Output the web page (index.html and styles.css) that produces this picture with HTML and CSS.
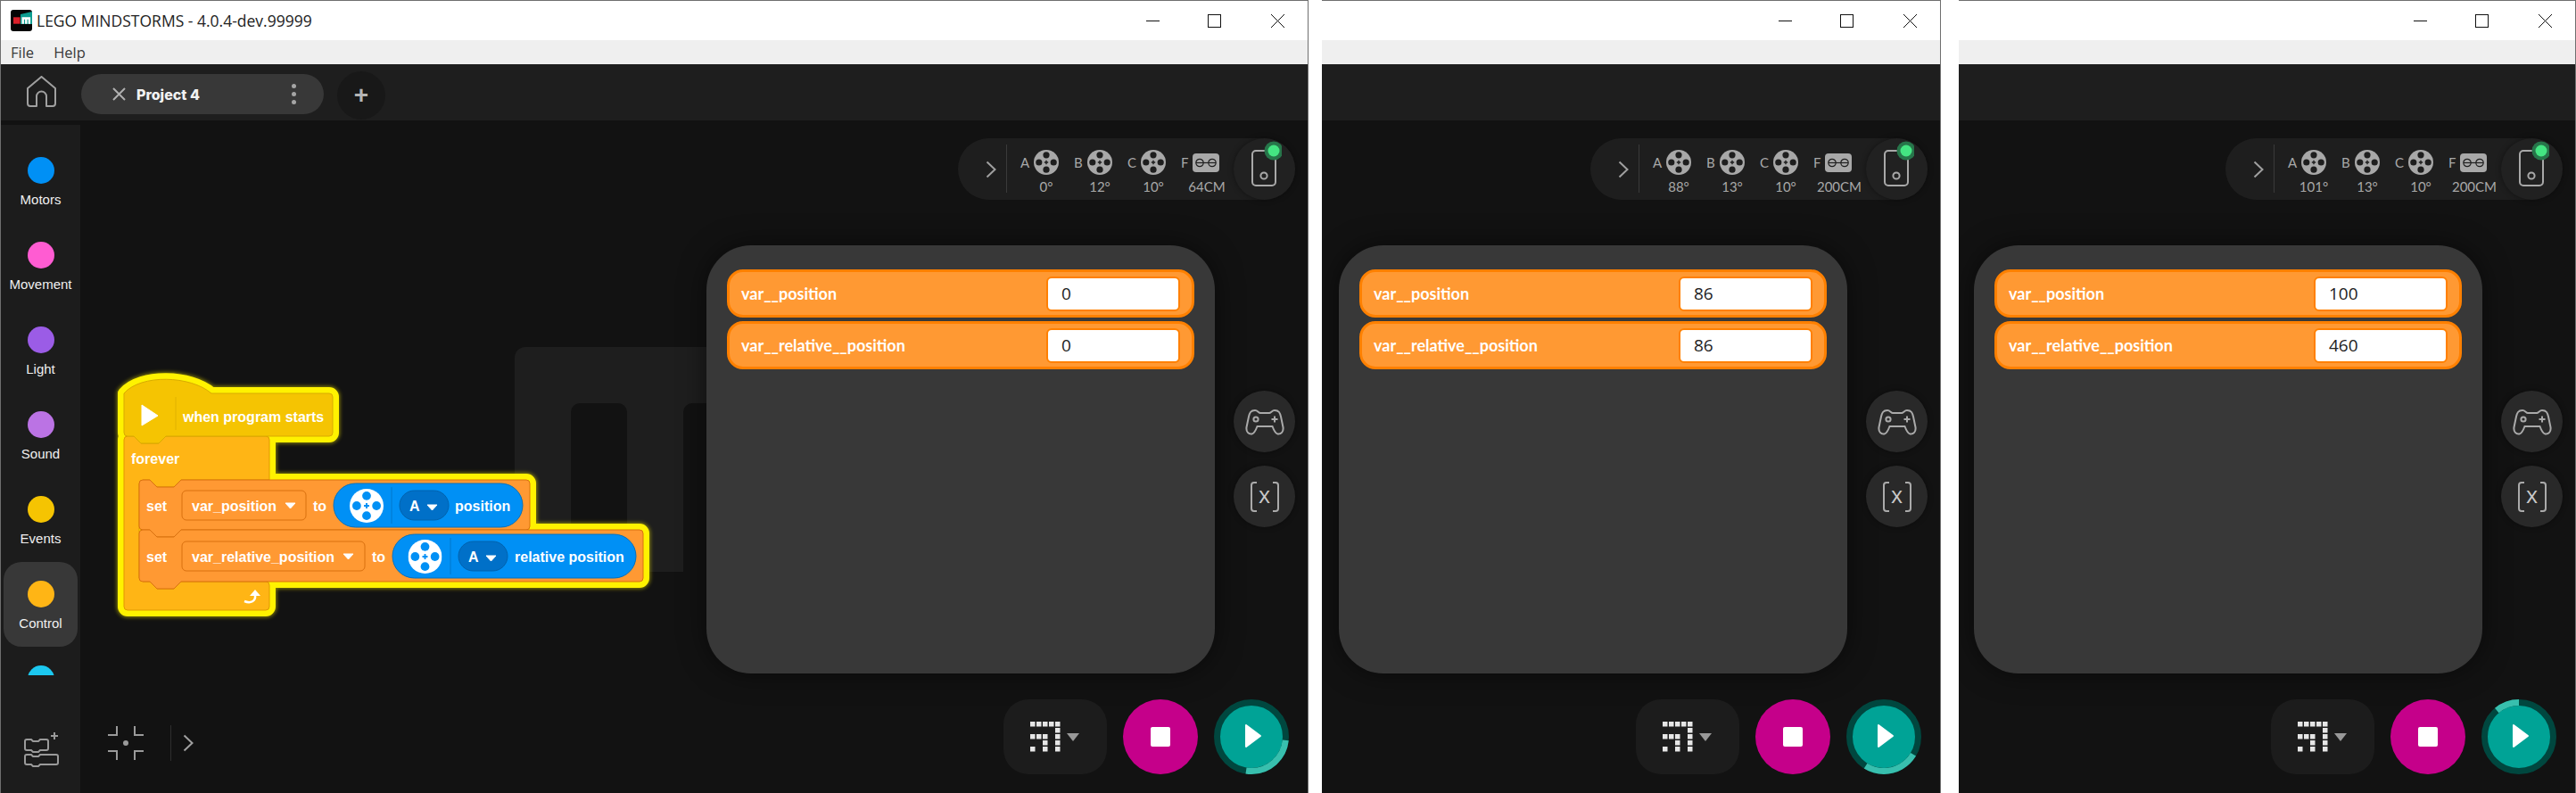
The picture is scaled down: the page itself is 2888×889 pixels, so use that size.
FILE: index.html
```html
<!DOCTYPE html>
<html lang="en">
<head>
    <meta charset="UTF-8">
    <title>LEGO MINDSTORMS - 4.0.4-dev.99999</title>
    <link rel="stylesheet" href="styles.css">
</head>
<body>
    <!-- shared icons -->
    <svg class="icon-defs" width="0" height="0">
        <symbol id="wheel" viewBox="0 0 28 28">
            <circle class="wheel-body" cx="14" cy="14" r="14"/>
            <circle class="wheel-hole" cx="14" cy="5.8" r="3.6"/>
            <circle class="wheel-hole" cx="14" cy="22.2" r="3.6"/>
            <circle class="wheel-hole" cx="5.8" cy="14" r="3.6"/>
            <circle class="wheel-hole" cx="22.2" cy="14" r="3.6"/>
            <path class="wheel-hole" d="M13.3 11.8h1.4v1.5h1.5v1.4h-1.5v1.5h-1.4v-1.5h-1.5v-1.4h1.5z"/>
        </symbol>
        <symbol id="sensor" viewBox="0 0 30 21">
            <rect class="wheel-body" width="30" height="21" rx="4"/>
            <circle class="sensor-eye" cx="8" cy="10.5" r="4.2"/>
            <circle class="sensor-eye" cx="22" cy="10.5" r="4.2"/>
            <path class="sensor-eye" d="M4 10.5h22"/>
        </symbol>
        <symbol id="hub" viewBox="0 0 40 60">
            <rect class="hub-line" x="7" y="11" width="26" height="39" rx="4"/>
            <circle class="hub-line" cx="20" cy="39" r="3.6"/>
            <circle class="hub-halo" cx="31" cy="11" r="10.5"/>
            <circle class="hub-led" cx="31" cy="11" r="6.5"/>
        </symbol>
        <symbol id="chevron" viewBox="0 0 12 20">
            <path class="chevron-line" d="M1.5 1.5L10.5 10L1.5 18.5"/>
        </symbol>
        <symbol id="gamepad" viewBox="0 0 44 30">
            <path class="pad-line" d="M11 2C6 2 5 5 4 9L1.5 21C.8 26 4 29 7.5 28.5C10 28 12 24 13.5 20H30.5C32 24 34 28 36.5 28.5C40 29 43.2 26 42.5 21L40 9C39 5 38 2 33 2C30 2 29 5 27 5H17C15 5 14 2 11 2Z"/>
            <circle class="pad-line" cx="12" cy="12" r="2.6"/>
            <path class="pad-line" d="M33 8.5v7M29.5 12h7"/>
        </symbol>
        <symbol id="brackets" viewBox="0 0 34 34">
            <path class="pad-line" d="M8 1H5A3 3 0 0 0 2 4V30A3 3 0 0 0 5 33H8M26 1H29A3 3 0 0 1 32 4V30A3 3 0 0 1 29 33H26"/>
        </symbol>
        <symbol id="matrix" viewBox="0 0 34 34">
            <g class="matrix-dots">
                <rect x="0" y="0" width="5.5" height="5.5"/><rect x="7" y="0" width="5.5" height="5.5"/><rect x="14" y="0" width="5.5" height="5.5"/><rect x="21" y="0" width="5.5" height="5.5"/><rect x="28" y="0" width="5.5" height="5.5"/>
                <rect x="28" y="7" width="5.5" height="5.5"/>
                <rect x="0" y="14" width="5.5" height="5.5"/><rect x="7" y="14" width="5.5" height="5.5"/><rect x="14" y="14" width="5.5" height="5.5"/><rect x="28" y="14" width="5.5" height="5.5"/>
                <rect x="14" y="21" width="5.5" height="5.5"/><rect x="28" y="21" width="5.5" height="5.5"/>
                <rect x="0" y="28" width="5.5" height="5.5"/><rect x="14" y="28" width="5.5" height="5.5"/><rect x="28" y="28" width="5.5" height="5.5"/>
            </g>
        </symbol>
        <symbol id="play-mark" viewBox="0 0 20 28">
            <path class="play-mark" d="M2 2L18 14L2 26Z"/>
        </symbol>
        <symbol id="win-min" viewBox="0 0 15 15"><path class="win-line" d="M0 7.5H15"/></symbol>
        <symbol id="win-max" viewBox="0 0 15 15"><rect class="win-line" x=".5" y=".5" width="14" height="14"/></symbol>
        <symbol id="win-close" viewBox="0 0 15 15"><path class="win-line" d="M0 0L15 15M15 0L0 15"/></symbol>
    </svg>

    <!-- window 1 -->
    <section class="window window-main">
        <header class="titlebar">
            <svg class="app-logo" viewBox="0 0 24 24">
                <rect width="24" height="24" rx="3" fill="#050505"/>
                <path d="M11 8V5L24 2V16H11Z" fill="#0c9c8f"/>
                <rect x="3" y="8.3" width="7.6" height="7.4" fill="#d9202a"/>
                <path d="M12.5 8.3h9.6v7.4h-2.4v-5h-1.2v5h-2.4v-5h-1.2v5h-2.4z" fill="#fff"/>
            </svg>
            <span class="app-title">LEGO MINDSTORMS - 4.0.4-dev.99999</span>
            <div class="win-buttons">
                <svg class="win-btn"><use href="#win-min"/></svg>
                <svg class="win-btn"><use href="#win-max"/></svg>
                <svg class="win-btn win-btn-close"><use href="#win-close"/></svg>
            </div>
        </header>
        <nav class="menubar"><span>File</span><span>Help</span></nav>
        <div class="tabbar">
            <svg class="home-icon" viewBox="0 0 33 35">
                <path d="M1 14L16.5 1L32 14V31A3 3 0 0 1 29 34H22V23A5.5 5.5 0 0 0 11 23V34H4A3 3 0 0 1 1 31Z"/>
            </svg>
            <div class="tab">
                <svg class="tab-close" viewBox="0 0 15 15"><path d="M1 1L14 14M14 1L1 14"/></svg>
                <span class="tab-name">Project 4</span>
                <span class="tab-menu"><i></i><i></i><i></i></span>
            </div>
            <div class="tab-add">+</div>
        </div>
        <div class="workspace">
            <aside class="sidebar">
                <ul class="categories">
                    <li class="category"><span class="dot dot-motors"></span>Motors</li>
                    <li class="category"><span class="dot dot-movement"></span>Movement</li>
                    <li class="category"><span class="dot dot-light"></span>Light</li>
                    <li class="category"><span class="dot dot-sound"></span>Sound</li>
                    <li class="category"><span class="dot dot-events"></span>Events</li>
                    <li class="category category-active"><span class="dot dot-control"></span>Control</li>
                    <li class="category"><span class="dot dot-sensors"></span></li>
                </ul>
                <svg class="add-blocks" viewBox="0 0 40 40">
                    <path d="M3 9H8L10 11H16L18 9H25A2 2 0 0 1 27 11V19A2 2 0 0 1 25 21H18L16 23H10L8 21H3A2 2 0 0 1 1 19V11A2 2 0 0 1 3 9Z"/>
                    <path d="M3 26H8L10 28H16L18 26H36A2 2 0 0 1 38 28V35A2 2 0 0 1 36 37H18L16 39H10L8 37H3A2 2 0 0 1 1 35V28A2 2 0 0 1 3 26Z"/>
                    <path d="M34 1V9M30 5H38"/>
                </svg>
            </aside>

            <div class="watermark"><i class="wm-slot"></i><i class="wm-slot"></i></div>

            <svg class="blocks" viewBox="1 135 760 620" width="760" height="620">
                <defs>
                    <filter id="glow-blur" x="-10%" y="-10%" width="120%" height="120%"><feGaussianBlur stdDeviation="2"/></filter>
                    <path id="hat-shape" d="M139 441C158 419 214 421 237 441H369A4 4 0 0 1 373 445V485A4 4 0 0 1 369 489H186L178 497H158L150 489H143A4 4 0 0 1 139 485Z"/>
                    <path id="c-shape" d="M139 493A4 4 0 0 1 143 489H150L158 497H178L186 489H298A4 4 0 0 1 302 493V538H203L195 546H176L168 538H160L156 542V648L160 652H168L176 660H195L203 652H298A4 4 0 0 1 302 656V680A4 4 0 0 1 298 684H143A4 4 0 0 1 139 680Z"/>
                    <path id="set1-shape" d="M156 542A4 4 0 0 1 160 538H168L176 546H195L203 538H590A4 4 0 0 1 594 542V590A4 4 0 0 1 590 594H203L195 602H176L168 594H160A4 4 0 0 1 156 590Z"/>
                    <path id="set2-shape" d="M156 598A4 4 0 0 1 160 594H168L176 602H195L203 594H717A4 4 0 0 1 721 598V648A4 4 0 0 1 717 652H203L195 660H176L168 652H160A4 4 0 0 1 156 648Z"/>
                    <g id="stack-shape">
                        <use href="#hat-shape"/><use href="#c-shape"/><use href="#set1-shape"/><use href="#set2-shape"/>
                    </g>
                </defs>

                <use href="#stack-shape" class="block-glow-soft" filter="url(#glow-blur)"/>
                <use href="#stack-shape" class="block-glow"/>

                <use href="#c-shape" class="block-c"/>
                <use href="#hat-shape" class="block-hat"/>
                <path class="hat-sep" d="M197 445V482"/>
                <path class="hat-play" d="M159 454L177 466L159 477Z"/>
                <text class="block-text" x="205" y="473">when program starts</text>
                <text class="block-text" x="147" y="520">forever</text>
                <path class="return-arrow" d="M274 674C281 677 287 674 286 667"/>
                <path class="return-head" d="M280 668L286 661L292 668Z"/>

                <use href="#set1-shape" class="block-set"/>
                <text class="block-text" x="164" y="573">set</text>
                <rect class="var-field" x="204" y="550" width="139" height="33" rx="5"/>
                <text class="block-text" x="215" y="573">var_position</text>
                <path class="caret" d="M320 564H331L325.500 570Z"/>
                <text class="block-text" x="351" y="573">to</text>
                <rect class="reporter" x="374" y="542" width="212" height="49" rx="24.500"/>
                <use href="#wheel" class="wheel-motor" x="392" y="548" width="38" height="38"/>
                <path class="reporter-sep" d="M439 546V587"/>
                <rect class="port-field" x="448" y="550" width="55" height="33" rx="16.500"/>
                <text class="block-text" x="459" y="573">A</text>
                <path class="caret" d="M479 566H490L484.500 572Z"/>
                <text class="block-text" x="510" y="573">position</text>

                <use href="#set2-shape" class="block-set"/>
                <text class="block-text" x="164" y="630">set</text>
                <rect class="var-field" x="204" y="607" width="205" height="33" rx="5"/>
                <text class="block-text" x="215" y="630">var_relative_position</text>
                <path class="caret" d="M385 621H396L390.500 627Z"/>
                <text class="block-text" x="417" y="630">to</text>
                <rect class="reporter" x="440" y="599" width="273" height="49" rx="24.500"/>
                <use href="#wheel" class="wheel-motor" x="457.500" y="605" width="38" height="38"/>
                <path class="reporter-sep" d="M505 603V644"/>
                <rect class="port-field" x="514" y="607" width="55" height="33" rx="16.500"/>
                <text class="block-text" x="525" y="630">A</text>
                <path class="caret" d="M545 623H556L550.500 629Z"/>
                <text class="block-text" x="577" y="630">relative position</text>
            </svg>

            <div class="fit-tools">
                <svg class="fit-icon" viewBox="0 0 40 40">
                    <path d="M10 1V11H0M30 1V11H40M10 39V29H0M30 39V29H40"/>
                    <circle cx="20" cy="20" r="3"/>
                </svg>
                <svg class="fit-chevron"><use href="#chevron"/></svg>
            </div>

            <div class="status-bar">
                <svg class="status-toggle"><use href="#chevron"/></svg>
                <div class="status-item"><span class="port">A</span><svg class="port-icon"><use href="#wheel"/></svg><span class="port-value">0°</span></div>
                <div class="status-item"><span class="port">B</span><svg class="port-icon"><use href="#wheel"/></svg><span class="port-value">12°</span></div>
                <div class="status-item"><span class="port">C</span><svg class="port-icon"><use href="#wheel"/></svg><span class="port-value">10°</span></div>
                <div class="status-item"><span class="port">F</span><svg class="port-icon port-icon-sensor"><use href="#sensor"/></svg><span class="port-value">64CM</span></div>
                <div class="hub-button"><svg class="hub-icon"><use href="#hub"/></svg></div>
            </div>

            <div class="var-panel">
                <div class="var-row"><span class="var-name">var__position</span><input class="var-value" value="0" readonly></div>
                <div class="var-row"><span class="var-name">var__relative__position</span><input class="var-value" value="0" readonly></div>
            </div>

            <div class="side-tools">
                <div class="side-button"><svg class="gamepad"><use href="#gamepad"/></svg></div>
                <div class="side-button"><svg class="brackets"><use href="#brackets"/></svg><span class="brackets-x">x</span></div>
            </div>

            <div class="run-controls">
                <div class="mode-button"><svg class="matrix"><use href="#matrix"/></svg><span class="mode-caret"></span></div>
                <div class="stop-button"><span class="stop-mark"></span></div>
                <div class="play-button">
                    <svg class="play-ring" viewBox="0 0 84 84">
                        <circle class="ring-track" cx="42" cy="42" r="38.500"/>
                        <circle class="ring-progress" cx="42" cy="42" r="38.500" pathLength="360" stroke-dasharray="93 360" stroke-dashoffset="-96"/>
                    </svg>
                    <svg class="play-icon"><use href="#play-mark"/></svg>
                </div>
            </div>
        </div>
    </section>

    <!-- window 2 -->
    <section class="window window-second">
        <header class="titlebar">
            <div class="win-buttons">
                <svg class="win-btn"><use href="#win-min"/></svg>
                <svg class="win-btn"><use href="#win-max"/></svg>
                <svg class="win-btn win-btn-close"><use href="#win-close"/></svg>
            </div>
        </header>
        <nav class="menubar"></nav>
        <div class="tabbar"></div>
        <div class="workspace">
            <div class="status-bar">
                <svg class="status-toggle"><use href="#chevron"/></svg>
                <div class="status-item"><span class="port">A</span><svg class="port-icon"><use href="#wheel"/></svg><span class="port-value">88°</span></div>
                <div class="status-item"><span class="port">B</span><svg class="port-icon"><use href="#wheel"/></svg><span class="port-value">13°</span></div>
                <div class="status-item"><span class="port">C</span><svg class="port-icon"><use href="#wheel"/></svg><span class="port-value">10°</span></div>
                <div class="status-item"><span class="port">F</span><svg class="port-icon port-icon-sensor"><use href="#sensor"/></svg><span class="port-value">200CM</span></div>
                <div class="hub-button"><svg class="hub-icon"><use href="#hub"/></svg></div>
            </div>

            <div class="var-panel">
                <div class="var-row"><span class="var-name">var__position</span><input class="var-value" value="86" readonly></div>
                <div class="var-row"><span class="var-name">var__relative__position</span><input class="var-value" value="86" readonly></div>
            </div>

            <div class="side-tools">
                <div class="side-button"><svg class="gamepad"><use href="#gamepad"/></svg></div>
                <div class="side-button"><svg class="brackets"><use href="#brackets"/></svg><span class="brackets-x">x</span></div>
            </div>

            <div class="run-controls">
                <div class="mode-button"><svg class="matrix"><use href="#matrix"/></svg><span class="mode-caret"></span></div>
                <div class="stop-button"><span class="stop-mark"></span></div>
                <div class="play-button">
                    <svg class="play-ring" viewBox="0 0 84 84">
                        <circle class="ring-track" cx="42" cy="42" r="38.500"/>
                        <circle class="ring-progress" cx="42" cy="42" r="38.500" pathLength="360" stroke-dasharray="91 360" stroke-dashoffset="-121"/>
                    </svg>
                    <svg class="play-icon"><use href="#play-mark"/></svg>
                </div>
            </div>
        </div>
    </section>

    <!-- window 3 -->
    <section class="window window-third">
        <header class="titlebar">
            <div class="win-buttons">
                <svg class="win-btn"><use href="#win-min"/></svg>
                <svg class="win-btn"><use href="#win-max"/></svg>
                <svg class="win-btn win-btn-close"><use href="#win-close"/></svg>
            </div>
        </header>
        <nav class="menubar"></nav>
        <div class="tabbar"></div>
        <div class="workspace">
            <div class="status-bar">
                <svg class="status-toggle"><use href="#chevron"/></svg>
                <div class="status-item"><span class="port">A</span><svg class="port-icon"><use href="#wheel"/></svg><span class="port-value">101°</span></div>
                <div class="status-item"><span class="port">B</span><svg class="port-icon"><use href="#wheel"/></svg><span class="port-value">13°</span></div>
                <div class="status-item"><span class="port">C</span><svg class="port-icon"><use href="#wheel"/></svg><span class="port-value">10°</span></div>
                <div class="status-item"><span class="port">F</span><svg class="port-icon port-icon-sensor"><use href="#sensor"/></svg><span class="port-value">200CM</span></div>
                <div class="hub-button"><svg class="hub-icon"><use href="#hub"/></svg></div>
            </div>

            <div class="var-panel">
                <div class="var-row"><span class="var-name">var__position</span><input class="var-value" value="100" readonly></div>
                <div class="var-row"><span class="var-name">var__relative__position</span><input class="var-value" value="460" readonly></div>
            </div>

            <div class="side-tools">
                <div class="side-button"><svg class="gamepad"><use href="#gamepad"/></svg></div>
                <div class="side-button"><svg class="brackets"><use href="#brackets"/></svg><span class="brackets-x">x</span></div>
            </div>

            <div class="run-controls">
                <div class="mode-button"><svg class="matrix"><use href="#matrix"/></svg><span class="mode-caret"></span></div>
                <div class="stop-button"><span class="stop-mark"></span></div>
                <div class="play-button">
                    <svg class="play-ring" viewBox="0 0 84 84">
                        <circle class="ring-track" cx="42" cy="42" r="38.500"/>
                        <circle class="ring-progress" cx="42" cy="42" r="38.500" pathLength="360" stroke-dasharray="85 360" stroke-dashoffset="-320"/>
                    </svg>
                    <svg class="play-icon"><use href="#play-mark"/></svg>
                </div>
            </div>
        </div>
    </section>
</body>
</html>
```

FILE: styles.css
```css
html, body {
    margin: 0;
    height: 100%;
}
body {
    display: flex;
    width: 2888px;
    height: 889px;
    overflow: hidden;
    background: #fff;
    font-family: "Liberation Sans", Arial, sans-serif;
}
.icon-defs {
    position: absolute;
}

/* windows */
.window {
    display: flex;
    flex-direction: column;
    flex: none;
    box-sizing: border-box;
    height: 889px;
    border-top: 1px solid #6f6f6f;
    border-right: 1px solid #6f6f6f;
}
.window-main {
    width: 1467px;
    border-left: 1px solid #6f6f6f;
}
.window-second {
    width: 694px;
    margin-left: 15px;
}
.window-third {
    width: 692px;
    margin-left: 20px;
}

/* title bar */
.titlebar {
    display: flex;
    align-items: center;
    flex: none;
    height: 44px;
    background: #fff;
}
.app-logo {
    width: 24px;
    height: 24px;
    margin-left: 11px;
}
.app-title {
    margin-left: 5px;
    font-family: "Open Sans", sans-serif;
    font-size: 17.500px;
    color: #222;
    white-space: nowrap;
}
.win-buttons {
    display: flex;
    margin-left: auto;
    margin-right: 26px;
    gap: 54px;
}
.win-btn {
    width: 15px;
    height: 15px;
}
.win-btn-close {
    margin-left: 2px;
}
.win-line {
    fill: none;
    stroke: #111;
    stroke-width: 1;
}

.menubar {
    display: flex;
    flex: none;
    align-items: center;
    gap: 22px;
    box-sizing: border-box;
    height: 27px;
    padding-left: 11px;
    background: #efefef;
    font-family: "Open Sans", sans-serif;
    font-size: 16.500px;
    color: #3a3a3a;
}

/* tabs */
.tabbar {
    display: flex;
    align-items: center;
    flex: none;
    height: 63px;
    padding-left: 29px;
    background: #1e1e1e;
}
.home-icon {
    width: 33px;
    height: 35px;
    margin-top: -2px;
}
.home-icon path {
    fill: none;
    stroke: #a0a0a0;
    stroke-width: 2;
    stroke-linejoin: round;
}
.tab {
    display: flex;
    align-items: center;
    box-sizing: border-box;
    width: 272px;
    height: 45px;
    margin-left: 28px;
    margin-top: 4px;
    padding: 0 31px 0 35px;
    border-radius: 23px;
    background: #383838;
}
.tab-close {
    width: 15px;
    height: 15px;
}
.tab-close path {
    stroke: #b0b0b0;
    stroke-width: 2;
}
.tab-name {
    margin-left: 12px;
    font-family: Inter, sans-serif;
    font-size: 16px;
    font-weight: 800;
    color: #f2f2f2;
}
.tab-menu {
    display: flex;
    flex-direction: column;
    gap: 4px;
    margin-left: auto;
}
.tab-menu i {
    width: 5px;
    height: 5px;
    border-radius: 50%;
    background: #a5a5a5;
}
.tab-add {
    display: flex;
    align-items: center;
    justify-content: center;
    width: 54px;
    height: 54px;
    margin-left: 15px;
    margin-top: 7px;
    border-radius: 50%;
    background: #181818;
    color: #b5b5b5;
    font-size: 28px;
    font-weight: bold;
}

/* workspace */
.workspace {
    position: relative;
    flex: 1;
    display: flex;
    overflow: hidden;
    background: #121212;
}
.sidebar {
    display: flex;
    flex-direction: column;
    flex: none;
    width: 89px;
    margin-top: 5px;
    background: #1c1c1c;
}
.categories {
    flex: none;
    height: 617px;
    margin: 0;
    padding: 15px 0 0;
    box-sizing: border-box;
    overflow: hidden;
    list-style: none;
}
.category {
    display: flex;
    flex-direction: column;
    align-items: center;
    box-sizing: border-box;
    width: 83px;
    height: 95px;
    margin-left: 3px;
    padding-top: 21px;
    border-radius: 20px;
    font-size: 15px;
    line-height: 24px;
    color: #f0f0f0;
}
.category-active {
    background: #383838;
}
.dot {
    width: 30px;
    height: 30px;
    margin-bottom: 6px;
    border-radius: 50%;
    flex: none;
}
.dot-motors { background: #0090f5; }
.dot-movement { background: #ff5cd2; }
.dot-light { background: #9b5ce6; }
.dot-sound { background: #bb73e4; }
.dot-events { background: #f5c402; }
.dot-control { background: #ffb515; }
.dot-sensors { background: #1cc8f0; }

.add-blocks {
    width: 40px;
    height: 40px;
    margin: 63px 0 0 26px;
}
.add-blocks path {
    fill: none;
    stroke: #9a9a9a;
    stroke-width: 2;
}

/* faint logo behind the blocks */
.watermark {
    position: absolute;
    left: 576px;
    top: 254px;
    width: 320px;
    height: 252px;
    border-radius: 12px;
    background: #1e1e1e;
    overflow: hidden;
}
.wm-slot {
    position: absolute;
    top: 63px;
    left: 63px;
    width: 63px;
    height: 240px;
    border-radius: 10px;
    background: #121212;
}
.wm-slot + .wm-slot {
    left: 189px;
}

/* blocks */
.blocks {
    position: absolute;
    left: 0;
    top: 0;
    overflow: visible;
}
.block-glow {
    fill: #fff200;
    stroke: #fff200;
    stroke-width: 14px;
    stroke-linejoin: round;
}
.block-glow-soft {
    fill: #fff200;
    stroke: #fff200;
    stroke-width: 16px;
    stroke-linejoin: round;
    opacity: .5;
}
.block-hat {
    fill: #f5c402;
    stroke: #d8ab00;
}
.block-c {
    fill: #ffb515;
    stroke: #e09a00;
}
.block-set {
    fill: #ff9933;
    stroke: #d9700f;
}
.block-text {
    font-family: "Liberation Sans", Arial, sans-serif;
    font-size: 16px;
    font-weight: bold;
    fill: #fff;
}
.hat-sep {
    stroke: #e0b200;
}
.hat-play {
    fill: #fff;
    stroke: #fff;
    stroke-linejoin: round;
}
.return-arrow {
    fill: none;
    stroke: #fff;
    stroke-width: 2.500px;
}
.return-head {
    fill: #fff;
}
.var-field {
    fill: #ff9933;
    stroke: #d9700f;
}
.caret {
    fill: #fff;
    stroke: #fff;
    stroke-linejoin: round;
}
.reporter {
    fill: #0090f5;
    stroke: #0070c0;
}
.reporter-sep {
    stroke: #0078cc;
}
.port-field {
    fill: #0070c8;
    stroke: #0062ad;
}
.wheel-body {
    fill: var(--wheel-color, #a8a8a8);
}
.wheel-hole {
    fill: var(--wheel-hole, #1e1e1e);
}
.wheel-motor {
    --wheel-color: #fff;
    --wheel-hole: #0090f5;
}
.sensor-eye {
    fill: none;
    stroke: #1e1e1e;
    stroke-width: 1.200px;
}

/* fit / zoom tools */
.fit-tools {
    position: absolute;
    left: 120px;
    bottom: 29px;
    display: flex;
    align-items: center;
    height: 54px;
}
.fit-icon {
    width: 40px;
    height: 40px;
    padding-right: 30px;
    border-right: 1px solid #2e2e2e;
}
.fit-icon path {
    fill: none;
    stroke: #9a9a9a;
    stroke-width: 2;
}
.fit-icon circle {
    fill: #9a9a9a;
}
.fit-chevron {
    width: 12px;
    height: 22px;
    margin-left: 13px;
}
.chevron-line {
    fill: none;
    stroke: #a0a0a0;
    stroke-width: 2;
}

/* status bar */
.status-bar {
    position: absolute;
    top: 20px;
    right: 14px;
    display: flex;
    box-sizing: border-box;
    width: 378px;
    height: 69px;
    padding-left: 31px;
    border-radius: 35px;
    background: #1e1e1e;
}
.status-toggle {
    flex: none;
    width: 12px;
    height: 20px;
    margin-top: 25px;
    padding-right: 11px;
}
.status-item {
    position: relative;
    display: grid;
    grid-template-columns: 15px 28px;
    grid-template-rows: 34px 20px;
    align-items: center;
    flex: none;
    width: 60px;
    padding-top: 10px;
    color: #a8a8a8;
    font-family: Lato, sans-serif;
    font-size: 15px;
}
.status-toggle + .status-item {
    margin-left: 16px;
}
.status-toggle + .status-item::before {
    content: "";
    position: absolute;
    left: -16px;
    top: 7px;
    width: 1px;
    height: 54px;
    background: #3a3a3a;
}
.port {
    grid-column: 1;
    grid-row: 1;
}
.port-icon {
    grid-column: 2;
    grid-row: 1;
    width: 28px;
    height: 28px;
}
.port-icon-sensor {
    width: 30px;
    height: 21px;
    margin-left: -2px;
}
.port-value {
    grid-column: 2;
    grid-row: 2;
    justify-self: center;
    white-space: nowrap;
}
.hub-button {
    position: absolute;
    right: 0;
    top: 0;
    width: 69px;
    height: 69px;
    border-radius: 50%;
    background: #212121;
    box-shadow: 0 0 6px rgba(0, 0, 0, .4);
}
.hub-icon {
    width: 40px;
    height: 60px;
    margin: 3px 0 0 14px;
}
.hub-line {
    fill: none;
    stroke: #a8a8a8;
    stroke-width: 2;
}
.hub-halo {
    fill: #27754a;
}
.hub-led {
    fill: #44e582;
}

/* variables panel */
.var-panel {
    position: absolute;
    top: 140px;
    right: 104px;
    display: flex;
    flex-direction: column;
    gap: 4px;
    box-sizing: border-box;
    width: 570px;
    height: 480px;
    padding: 27px 23px;
    border-radius: 50px;
    background: #383838;
    box-shadow: 0 0 30px rgba(0, 0, 0, .5);
}
.var-row {
    display: flex;
    align-items: center;
    justify-content: space-between;
    box-sizing: border-box;
    height: 54px;
    padding: 0 13px 0 13px;
    border: 3px solid #ff8000;
    border-radius: 18px;
    background: #ff9933;
}
.var-name {
    font-family: Lato, sans-serif;
    font-size: 18px;
    font-weight: 700;
    color: #fff;
}
.var-value {
    box-sizing: border-box;
    width: 150px;
    height: 39px;
    padding: 0 15px;
    border: 2px solid #ff8000;
    border-radius: 6px;
    background: #fff;
    font-family: "Open Sans", sans-serif;
    font-size: 19px;
    color: #222;
    outline: none;
}

/* side buttons */
.side-tools {
    position: absolute;
    top: 303px;
    right: 14px;
    display: flex;
    flex-direction: column;
    gap: 15px;
}
.side-button {
    position: relative;
    display: flex;
    align-items: center;
    justify-content: center;
    width: 69px;
    height: 69px;
    border-radius: 50%;
    background: #292929;
    box-shadow: 0 0 6px rgba(0, 0, 0, .4);
}
.gamepad {
    width: 44px;
    height: 30px;
}
.brackets {
    width: 34px;
    height: 34px;
}
.pad-line {
    fill: none;
    stroke: #aaa;
    stroke-width: 2;
}
.brackets-x {
    position: absolute;
    left: 0;
    right: 0;
    top: 17px;
    text-align: center;
    font-family: "Open Sans", sans-serif;
    font-size: 25px;
    line-height: 30px;
    color: #c8c8c8;
}

/* run controls */
.run-controls {
    position: absolute;
    right: 21px;
    bottom: 21px;
    display: flex;
    gap: 18px;
}
.mode-button {
    display: flex;
    align-items: center;
    box-sizing: border-box;
    width: 116px;
    height: 84px;
    padding-left: 30px;
    border-radius: 28px;
    background: #1c1c1c;
}
.matrix {
    width: 34px;
    height: 34px;
}
.matrix-dots {
    fill: #e6e6e6;
}
.mode-caret {
    width: 0;
    height: 0;
    margin-left: 7px;
    border-top: 9px solid #999;
    border-left: 7.500px solid transparent;
    border-right: 7.500px solid transparent;
}
.stop-button {
    display: flex;
    align-items: center;
    justify-content: center;
    width: 84px;
    height: 84px;
    border-radius: 50%;
    background: #c5008a;
}
.stop-mark {
    width: 22px;
    height: 22px;
    border-radius: 2px;
    background: #fff;
}
.play-button {
    position: relative;
    width: 84px;
    height: 84px;
}
.play-ring {
    position: absolute;
    inset: 0;
    transform: rotate(-90deg);
}
.ring-track {
    fill: #00a396;
    stroke: #00473f;
    stroke-width: 7;
}
.ring-progress {
    fill: none;
    stroke: #38bfae;
    stroke-width: 7;
}
.play-icon {
    position: absolute;
    left: 34px;
    top: 27px;
    width: 20px;
    height: 28px;
}
.play-mark {
    fill: #fff;
    stroke: #fff;
    stroke-width: 2;
    stroke-linejoin: round;
}
```
